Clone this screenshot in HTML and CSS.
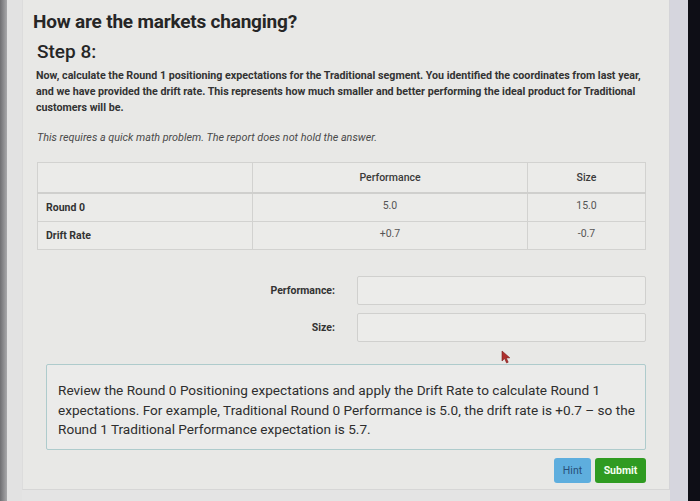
FILE: index.html
```html
<!DOCTYPE html>
<html>
<head>
<meta charset="utf-8">
<link rel="stylesheet" href="styles.css">
</head>
<body>
<div class="screen">
  <div class="bezel-left"></div>
  <div class="gutter"></div>
  <main class="panel">
    <h1 class="title">How are the markets changing?</h1>
    <h2 class="step">Step 8:</h2>
    <p class="intro">Now, calculate the Round 1 positioning expectations for the Traditional segment. You identified the coordinates from last year, and we have provided the drift rate. This represents how much smaller and better performing the ideal product for Traditional customers will be.</p>
    <p class="note">This requires a quick math problem. The report does not hold the answer.</p>
    <table class="data">
      <thead>
        <tr><th class="c-label"></th><th class="c-perf">Performance</th><th class="c-size">Size</th></tr>
      </thead>
      <tbody>
        <tr><td class="rowlabel">Round 0</td><td class="val">5.0</td><td class="val">15.0</td></tr>
        <tr><td class="rowlabel">Drift Rate</td><td class="val">+0.7</td><td class="val">-0.7</td></tr>
      </tbody>
    </table>
    <div class="form">
      <div class="field"><label class="flabel">Performance:</label><div class="input"></div></div>
      <div class="field"><label class="flabel">Size:</label><div class="input"></div></div>
    </div>
    <div class="hintbox">Review the Round 0 Positioning expectations and apply the Drift Rate to calculate Round 1 expectations. For example, Traditional Round 0 Performance is 5.0, the drift rate is +0.7 – so the Round 1 Traditional Performance expectation is 5.7.</div>
    <div class="actions">
      <button class="btn btn-hint">Hint</button>
      <button class="btn btn-submit">Submit</button>
    </div>
    <svg class="cursor" width="10" height="14" viewBox="0 0 10 14"><path d="M1 1 L1 11 L3.6 8.6 L5.6 13 L7.2 12.2 L5.3 7.9 L8.8 7.8 Z" fill="#b0302e" stroke="#7a1f1f" stroke-width="0.6"/></svg>
  </main>
  <div class="bezel-light"></div>
  <div class="bezel-dark"></div>
</div>
</body>
</html>
```
FILE: styles.css
```css
html, body {
  margin: 0;
  padding: 0;
}
body {
  width: 700px;
  height: 501px;
  overflow: hidden;
  background: #e4e4e4;
  font-family: Roboto, "Liberation Sans", sans-serif;
  color: #2f2f2f;
}
.screen {
  display: flex;
  width: 700px;
  height: 501px;
}
.bezel-left {
  width: 7px;
  background: linear-gradient(90deg, #6f6f72, #a9a9ab);
}
.gutter {
  width: 15px;
  background: #e2e2e2;
}
.panel {
  position: relative;
  height: 490px;
  padding: 0 23px 0 14px;
  box-sizing: border-box;
  width: 648px;
  background: #e8e8e6;
  border-bottom: 1px solid #d6d6d6;
  border-left: 1px solid #dcdcdc;
  border-right: 1px solid #d4d4d8;
  display: flex;
  flex-direction: column;
}
.bezel-light {
  width: 18px;
  background: #d6d6de;
}
.bezel-dark {
  width: 12px;
  background: #0e0e16;
}
.title {
  margin: 10px 0 0 -4px;
  font-size: 19px;
  line-height: 24px;
  font-weight: 700;
  color: #262626;
  letter-spacing: -0.2px;
}
.step {
  margin: 6px 0 0 0;
  font-size: 19px;
  line-height: 24px;
  font-weight: 500;
  color: #262626;
}
.intro {
  margin: 4px 0 0 -1px;
  font-size: 10.7px;
  line-height: 16px;
  font-weight: 700;
  color: #333;
}
.note {
  margin: 14px 0 0 0;
  font-size: 10.8px;
  line-height: 16px;
  font-style: italic;
  color: #4a4a4a;
}
.data {
  margin: 16px 0 0 0;
  width: 609px;
  border-collapse: collapse;
  font-size: 10.5px;
  background: #ebebe9;
}
.data th, .data td {
  border: 1px solid #d2d2d0;
  padding: 0 8px;
}
.data th {
  height: 29px;
  font-weight: 500;
  color: #3a3a3a;
  border-bottom: 2px solid #cfcfcd;
}
.c-label { width: 198px; }
.c-perf { width: 258px; }
.data td {
  height: 27px;
}
.rowlabel {
  font-weight: 700;
  color: #333;
}
.val {
  text-align: center;
  color: #555;
  vertical-align: top;
  padding-top: 5px !important;
  box-sizing: border-box;
}
.form {
  margin-top: 26px;
  display: flex;
  flex-direction: column;
  gap: 8px;
}
.field {
  display: flex;
  align-items: center;
}
.flabel {
  width: 321px;
  text-align: right;
  font-size: 10.5px;
  font-weight: 700;
  color: #333;
  padding-right: 22px;
  box-sizing: border-box;
}
.input {
  width: 290px;
  height: 29px;
  box-sizing: border-box;
  border: 1px solid #d0d0ce;
  border-radius: 2px;
  background: #ececea;
}
.hintbox {
  margin: 22px 0 0 9px;
  padding: 16px 6px 9px 11px;
  border: 1.5px solid #aecbcc;
  border-radius: 2px;
  background: #ebebea;
  font-size: 13.6px;
  line-height: 19.5px;
  color: #2e2e2e;
}
.actions {
  margin-top: 8px;
  display: flex;
  justify-content: flex-end;
  gap: 4px;
}
.btn {
  height: 25px;
  border: none;
  border-radius: 3px;
  font-family: Roboto, "Liberation Sans", sans-serif;
  font-size: 10.5px;
  padding: 0;
}
.btn-hint {
  width: 37px;
  background: #5eaede;
  color: #284f78;
}
.btn-submit {
  width: 51px;
  background: #2f9b21;
  color: #f4fff0;
  font-weight: 700;
}
.cursor {
  position: absolute;
  left: 478px;
  top: 350px;
}
```
